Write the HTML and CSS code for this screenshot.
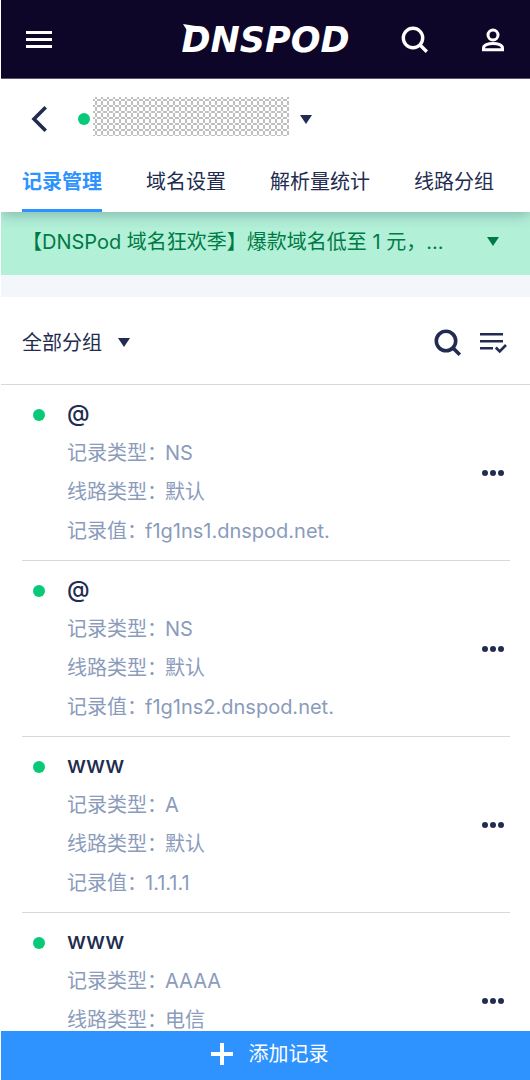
FILE: index.html
```
<!DOCTYPE html>
<html lang="zh-CN">
<head>
<meta charset="utf-8">
<meta name="viewport" content="width=device-width, initial-scale=1">
<title>DNSPod 记录管理</title>
<link rel="stylesheet" href="styles.css">
</head>
<body>
<div class="app">
  <header class="topbar">
    <button class="icon-btn topbar-menu" type="button" aria-label="菜单">
      <svg width="26" height="18" viewBox="0 0 26 18" fill="currentColor"><path d="M0 0h26v3H0zM0 7h26v3H0zM0 14h26v3H0z"/></svg>
    </button>
    <a class="logo" href="#">DNSPOD<svg class="logo-spike" width="20" height="8" viewBox="0 0 20 8" fill="currentColor"><path d="M0 0l19 3v5H5z"/></svg></a>
    <div class="topbar-actions">
      <button class="icon-btn" type="button" aria-label="搜索">
        <svg width="28" height="28" viewBox="0 0 28 28" fill="none" stroke="currentColor" stroke-width="3.4"><circle cx="12" cy="12" r="9.7"/><path d="M18.8 18.8l7 7"/></svg>
      </button>
      <button class="icon-btn" type="button" aria-label="账号">
        <svg width="24" height="24" viewBox="0 0 24 24" fill="none" stroke="currentColor" stroke-width="3"><circle cx="12" cy="7" r="5"/><path d="M2.5 21.7v-1.5c0-3 4.5-4.7 9.5-4.7s9.5 1.7 9.5 4.7v1.5z"/></svg>
      </button>
    </div>
  </header>

  <section class="domain">
    <div class="domain-row">
      <button class="icon-btn" type="button" aria-label="返回">
        <svg width="17" height="26" viewBox="0 0 17 26" fill="none" stroke="currentColor" stroke-width="3.6"><path d="M14.7 1.3L3 13l11.7 11.7"/></svg>
      </button>
      <button class="domain-picker" type="button" aria-label="切换域名">
        <span class="dot"></span>
        <svg class="mosaic" width="196" height="39" shape-rendering="crispEdges">
          <defs><pattern id="mosaic" width="6" height="6" patternUnits="userSpaceOnUse"><path d="M2 0h2v2H2zM0 2h2v2H0zM4 2h2v2H4zM2 4h2v2H2z" fill="#bfbfbf"/></pattern></defs>
          <rect width="196" height="39" fill="url(#mosaic)"/>
        </svg>
        <svg class="caret" width="12" height="9" viewBox="0 0 12 9" fill="currentColor"><path d="M0 0h12L6 9z"/></svg>
      </button>
    </div>
    <nav class="tabs">
      <a class="tab tab-active" href="#">记录管理</a>
      <a class="tab" href="#">域名设置</a>
      <a class="tab" href="#">解析量统计</a>
      <a class="tab" href="#">线路分组</a>
    </nav>
  </section>

  <button class="notice" type="button">
    <span class="notice-text">【DNSPod 域名狂欢季】爆款域名低至 1 元，...</span>
    <svg class="caret" width="12" height="9" viewBox="0 0 12 9" fill="currentColor"><path d="M0 0h12L6 9z"/></svg>
  </button>

  <main class="records">
    <div class="toolbar">
      <button class="group-picker" type="button">全部分组
        <svg class="caret" width="12" height="9" viewBox="0 0 12 9" fill="currentColor"><path d="M0 0h12L6 9z"/></svg>
      </button>
      <div class="toolbar-actions">
        <button class="icon-btn" type="button" aria-label="搜索记录">
          <svg width="28" height="28" viewBox="0 0 28 28" fill="none" stroke="currentColor" stroke-width="3.6"><circle cx="12" cy="12" r="9.7"/><path d="M18.8 18.8l7 7"/></svg>
        </button>
        <button class="icon-btn" type="button" aria-label="批量操作">
          <svg width="27" height="22" viewBox="0 0 27 22" fill="currentColor"><path d="M0 1h23v2.500H0zM0 8h23v2.500H0zM0 15h13v2.500H0z"/><path d="M15.8 15.5l3.900 4L26 13" fill="none" stroke="currentColor" stroke-width="2.6"/></svg>
        </button>
      </div>
    </div>
    <ul class="list">
      <li class="record">
        <span class="dot"></span>
        <div class="record-body">
          <h2 class="host">@</h2>
          <p class="field"><span class="label">记录类型：</span>NS</p>
          <p class="field"><span class="label">线路类型：</span>默认</p>
          <p class="field"><span class="label label-short">记录值：</span>f1g1ns1.dnspod.net.</p>
        </div>
        <button class="icon-btn" type="button" aria-label="更多"><svg width="24" height="8" viewBox="0 0 24 8" fill="currentColor"><circle cx="4" cy="4" r="3"/><circle cx="12" cy="4" r="3"/><circle cx="20" cy="4" r="3"/></svg></button>
      </li>
      <li class="record">
        <span class="dot"></span>
        <div class="record-body">
          <h2 class="host">@</h2>
          <p class="field"><span class="label">记录类型：</span>NS</p>
          <p class="field"><span class="label">线路类型：</span>默认</p>
          <p class="field"><span class="label label-short">记录值：</span>f1g1ns2.dnspod.net.</p>
        </div>
        <button class="icon-btn" type="button" aria-label="更多"><svg width="24" height="8" viewBox="0 0 24 8" fill="currentColor"><circle cx="4" cy="4" r="3"/><circle cx="12" cy="4" r="3"/><circle cx="20" cy="4" r="3"/></svg></button>
      </li>
      <li class="record">
        <span class="dot"></span>
        <div class="record-body">
          <h2 class="host">www</h2>
          <p class="field"><span class="label">记录类型：</span>A</p>
          <p class="field"><span class="label">线路类型：</span>默认</p>
          <p class="field"><span class="label label-short">记录值：</span>1.1.1.1</p>
        </div>
        <button class="icon-btn" type="button" aria-label="更多"><svg width="24" height="8" viewBox="0 0 24 8" fill="currentColor"><circle cx="4" cy="4" r="3"/><circle cx="12" cy="4" r="3"/><circle cx="20" cy="4" r="3"/></svg></button>
      </li>
      <li class="record">
        <span class="dot"></span>
        <div class="record-body">
          <h2 class="host">www</h2>
          <p class="field"><span class="label">记录类型：</span>AAAA</p>
          <p class="field"><span class="label">线路类型：</span>电信</p>
        </div>
        <button class="icon-btn" type="button" aria-label="更多"><svg width="24" height="8" viewBox="0 0 24 8" fill="currentColor"><circle cx="4" cy="4" r="3"/><circle cx="12" cy="4" r="3"/><circle cx="20" cy="4" r="3"/></svg></button>
      </li>
    </ul>
  </main>

  <button class="add" type="button">
    <svg width="22" height="22" viewBox="0 0 22 22" fill="currentColor"><path d="M9 0h4v9h9v4h-9v9H9v-9H0V9h9z"/></svg>
    添加记录
  </button>
</div>
</body>
</html>
```
FILE: styles.css
```
* { box-sizing: border-box; }

body {
  margin: 0;
  background: #fff;
  color: #222c50;
  font-family: Inter, "Noto Sans CJK SC", sans-serif;
  font-size: 20px;
  line-height: 30px;
}

button {
  margin: 0;
  padding: 0;
  border: 0;
  background: none;
  color: inherit;
  font: inherit;
  cursor: pointer;
}

a { color: inherit; text-decoration: none; }
svg { display: block; flex: none; }

.app {
  display: flex;
  flex-direction: column;
  height: 100vh;
  padding-left: 1px;
}

.icon-btn { display: flex; flex: none; }

.topbar {
  flex: none;
  display: grid;
  grid-template-columns: 1fr auto 1fr;
  align-items: center;
  height: 79px;
  padding: 2px 25px 0;
  border-bottom: 1px solid #5a5772;
  background: #0d0628;
  color: #fff;
}

.logo {
  position: relative;
  font-family: "DejaVu Sans", sans-serif;
  font-size: 35px;
  font-weight: 700;
  font-style: italic;
  line-height: 40px;
}
.logo-spike { position: absolute; left: 2px; top: 4px; }
.topbar-actions { display: flex; align-items: center; justify-content: flex-end; gap: 52px; }

.domain { flex: none; position: relative; box-shadow: 0 2px 14px rgba(20, 60, 80, .35); clip-path: inset(0 0 -16px 0); background: #fff; }
.domain-row { display: flex; align-items: center; gap: 30px; height: 80px; padding: 0 30px; }
.domain-picker { display: flex; align-items: center; }
.dot { flex: none; width: 12px; height: 12px; border-radius: 50%; background: #07c977; }
.mosaic { margin: 0 11px 5px 3px; }

.tabs { display: flex; gap: 44px; padding: 0 21px; }
.tab { height: 53px; padding-top: 8px; border-bottom: 3px solid transparent; white-space: nowrap; }
.tab-active { border-color: #2e93ff; color: #2e93ff; font-weight: 700; }

.notice {
  flex: none;
  display: flex;
  align-items: center;
  justify-content: space-between;
  height: 63px;
  padding: 0 31px 4px 21px;
  background: #b3f0d8;
  color: #007a45;
  text-align: left;
}
.notice-text { white-space: nowrap; }

.records { flex: 1; min-height: 0; display: flex; flex-direction: column; border-top: 22px solid #f3f7fb; }
.toolbar {
  flex: none;
  display: flex;
  align-items: center;
  justify-content: space-between;
  height: 88px;
  padding: 4px 23px 0 21px;
  border-bottom: 1px solid #d8d8d8;
}
.group-picker { display: flex; align-items: center; gap: 16px; }
.toolbar-actions { display: flex; align-items: center; gap: 18px; }

.list { flex: 1; min-height: 0; margin: 0; padding: 0 20px 0 21px; overflow-y: auto; scrollbar-width: none; list-style: none; }
.record { display: flex; align-items: center; min-height: 176px; padding: 9px 5px 9px 11px; border-bottom: 1px solid #d8d8d8; }
.record .dot { align-self: flex-start; margin: 15px 22px 0 0; }
.record-body { flex: 1; align-self: flex-start; }
.host { margin: 0; font-size: 23px; font-weight: 500; line-height: 39px; }
.field { display: flex; margin: 0; color: #8a9bbb; line-height: 39px; }
.field:first-of-type { line-height: 40px; }
.label { width: 98px; white-space: nowrap; }
.label-short { width: 78px; }

.add {
  flex: none;
  display: flex;
  align-items: center;
  justify-content: center;
  gap: 16px;
  height: 49px;
  padding: 0 0 3px 8px;
  background: #2e93ff;
  color: #fff;
}
```
